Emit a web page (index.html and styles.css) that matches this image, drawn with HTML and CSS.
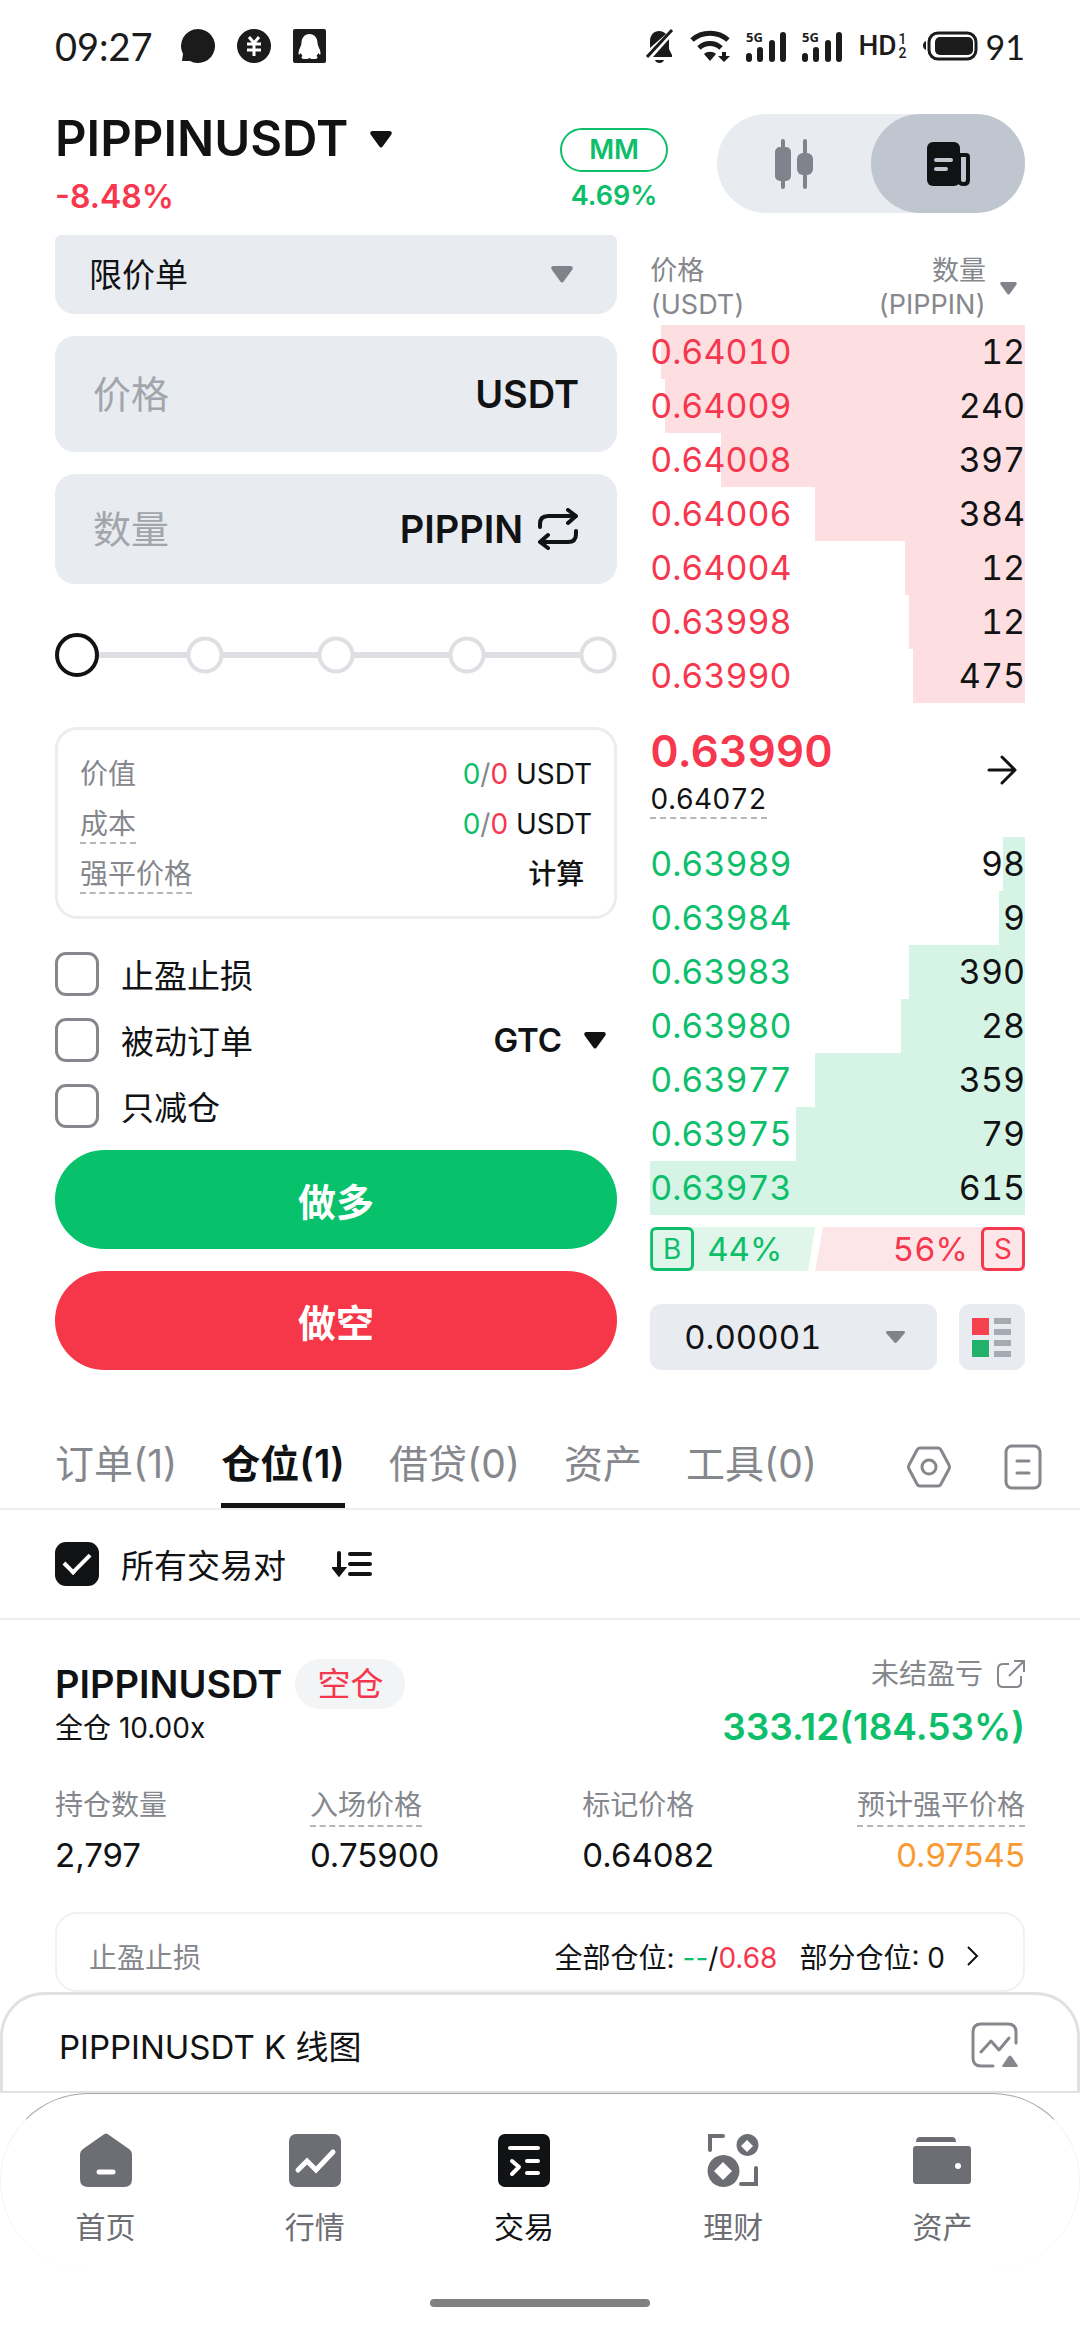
FILE: index.html
```html
<!DOCTYPE html>
<html lang="zh-CN">

<head>
    <meta charset="UTF-8">
    <meta name="viewport" content="width=device-width, initial-scale=1.0">
    <title>PIPPINUSDT 交易</title>
    <link rel="stylesheet" href="styles.css">
</head>

<body>

    <!-- Status bar -->
    <div class="status">
        <div class="status-left">
            <span class="clock">09:27</span>
            <svg width="34" height="34" viewBox="0 0 34 34"><path d="M17 0a17 17 0 1 1-8 32H1l1-7A17 17 0 0 1 17 0z" fill="#1b1b1b"/></svg>
            <svg width="34" height="34" viewBox="0 0 34 34"><circle cx="17" cy="17" r="17" fill="#1b1b1b"/><path d="M12 8l5 6 5-6M17 13v14M10 15h14M10 21h14" fill="none" stroke="#fff" stroke-width="3"/></svg>
            <svg width="33" height="34" viewBox="0 0 33 34"><rect width="33" height="34" rx="2" fill="#1b1b1b"/><path d="M16.500 5c5 0 8 4 8 9 0 3 3 6 3 10 0 2-1 2-2 0l-2 3c2 1 1 3-2 3-2 0-4 0-5-1-1 1-3 1-5 1-3 0-4-2-2-3l-2-3c-1 2-2 2-2 0 0-4 3-7 3-10 0-5 3-9 8-9z" fill="#fff"/></svg>
        </div>
        <div class="status-right">
            <svg width="28" height="36" viewBox="0 0 28 36"><path d="M4 20V13C4 7 8 3 13 3c3 0 5 1 7 3zM23 11v10l3 6v2H7z" fill="#1b1b1b"/><path d="M1 29L26 2" stroke="#1b1b1b" stroke-width="3"/><path d="M9 32h9c-1 4-8 4-9 0z" fill="#1b1b1b"/></svg>
            <svg width="40" height="34" viewBox="0 0 40 34"><path d="M2 11c10-9 26-9 36 0M9 19c6-6 16-6 22 0" fill="none" stroke="#1b1b1b" stroke-width="5"/><path d="M14 25c3-3 9-3 12 0l-6 7zM32 23h4v4h4l-6 6-6-6h4z" fill="#1b1b1b"/></svg>
            <svg width="40" height="38" viewBox="0 -4 40 38"><text x="0" y="11" class="net">5G</text><path d="M3 25v3M14 19v9M26 12v16M37 4v24" stroke="#1b1b1b" stroke-width="6" stroke-linecap="round"/></svg>
            <svg width="40" height="38" viewBox="0 -4 40 38"><text x="0" y="11" class="net">5G</text><path d="M3 25v3M14 19v9M26 12v16M37 4v24" stroke="#1b1b1b" stroke-width="6" stroke-linecap="round"/></svg>
            <span class="hd">HD<span class="sims"><i>1</i><i>2</i></span></span>
            <svg width="55" height="30" viewBox="0 0 55 30"><rect x="6" y="2" width="47" height="26" rx="9" fill="none" stroke="#1b1b1b" stroke-width="3"/><rect x="12" y="6" width="38" height="18" rx="5" fill="#1b1b1b"/><path d="M3 10v9c-4-1-4-8 0-9z" fill="#1b1b1b"/></svg>
            <span class="battery">91</span>
        </div>
    </div>

    <header>
        <div class="pair">
            <h1>PIPPINUSDT <svg width="22" height="17" viewBox="0 0 22 17"><path d="M2 0h18q3 1 1 4l-8 11q-2 3-4 0L1 4Q-1 1 2 0z" fill="#111214"/></svg></h1>
            <p class="change red">-8.48%</p>
        </div>
        <div class="margin-rate green">
            <span class="mm">MM</span>
            <span>4.69%</span>
        </div>
        <div class="toggle">
            <button type="button" aria-label="K线">
                <svg width="40" height="50" viewBox="0 0 40 50"><path d="M9 2v46M31 2v46" stroke="#81838c" stroke-width="4" stroke-linecap="round"/><rect x="1" y="8" width="16" height="34" rx="5" fill="#81838c"/><rect x="23" y="14" width="16" height="22" rx="6" fill="#81838c"/></svg>
            </button>
            <button type="button" class="on" aria-label="交易">
                <svg width="44" height="46" viewBox="0 0 44 46"><rect x="1" y="1" width="33" height="44" rx="6" fill="#111214"/><path d="M33 14h7q2 0 2 2v23q0 4-4 4-5 0-5-4z" fill="none" stroke="#111214" stroke-width="4"/><path d="M10 19h15M10 28h10" stroke="#bfc6d0" stroke-width="4" stroke-linecap="round"/></svg>
            </button>
        </div>
    </header>

    <main class="trade">
        <form class="order">
            <label class="select order-type">
                <select aria-label="订单类型"><option>限价单</option></select>
                <svg width="22" height="17" viewBox="0 0 22 17"><path d="M2 0h18q3 1 1 4l-8 11q-2 3-4 0L1 4Q-1 1 2 0z" fill="#81838c"/></svg>
            </label>
            <div class="field price">
                <input type="text" id="price" placeholder="价格" aria-label="价格">
                <label for="price">USDT</label>
            </div>
            <div class="field">
                <input type="text" id="amount" placeholder="数量" aria-label="数量">
                <label for="amount">PIPPIN</label>
                <svg width="42" height="42" viewBox="0 0 42 42" fill="none" stroke="#111214" stroke-width="4" stroke-linecap="round" stroke-linejoin="round"><path d="M3 19v-3q0-8 8-8h27M31 2l8 6-8 7M39 23v3q0 8-8 8H4M11 27l-8 7 8 6"/></svg>
            </div>
            <input type="range" class="slider" min="0" max="100" value="0" step="25" aria-label="仓位比例">

            <dl class="cost">
                <div><dt>价值</dt><dd><span class="green">0</span><i>/</i><span class="red">0</span> USDT</dd></div>
                <div><dt><span class="hint">成本</span></dt><dd><span class="green">0</span><i>/</i><span class="red">0</span> USDT</dd></div>
                <div><dt><span class="hint">强平价格</span></dt><dd class="calc">计算</dd></div>
            </dl>

            <div class="options">
                <label class="check"><input type="checkbox">止盈止损</label>
                <div class="option-row">
                    <label class="check"><input type="checkbox">被动订单</label>
                    <button type="button" class="gtc">GTC <svg width="22" height="17" viewBox="0 0 22 17"><path d="M2 0h18q3 1 1 4l-8 11q-2 3-4 0L1 4Q-1 1 2 0z" fill="#111214"/></svg></button>
                </div>
                <label class="check"><input type="checkbox">只减仓</label>
            </div>

            <button type="button" class="action long">做多</button>
            <button type="button" class="action short">做空</button>
        </form>

        <section class="book">
            <table class="asks">
                <thead>
                    <tr>
                        <th>价格<br>(USDT)</th>
                        <th><div class="qty-head"><span>数量<br>(PIPPIN)</span><svg width="17" height="13" viewBox="0 0 22 17"><path d="M2 0h18q3 1 1 4l-8 11q-2 3-4 0L1 4Q-1 1 2 0z" fill="#81838c"/></svg></div></th>
                    </tr>
                </thead>
                <tbody>
                    <tr style="--depth: 97%"><td>0.64010</td><td>12</td></tr>
                    <tr style="--depth: 96%"><td>0.64009</td><td>240</td></tr>
                    <tr style="--depth: 81%"><td>0.64008</td><td>397</td></tr>
                    <tr style="--depth: 56%"><td>0.64006</td><td>384</td></tr>
                    <tr style="--depth: 32%"><td>0.64004</td><td>12</td></tr>
                    <tr style="--depth: 31%"><td>0.63998</td><td>12</td></tr>
                    <tr style="--depth: 30%"><td>0.63990</td><td>475</td></tr>
                </tbody>
            </table>

            <div class="last">
                <div>
                    <strong class="red">0.63990</strong>
                    <span class="hint">0.64072</span>
                </div>
                <svg width="30" height="30" viewBox="0 0 30 30" fill="none" stroke="#111214" stroke-width="3" stroke-linecap="round" stroke-linejoin="round"><path d="M2 15h26M15 2l13 13-13 13"/></svg>
            </div>

            <table class="bids">
                <tbody>
                    <tr style="--depth: 6%"><td>0.63989</td><td>98</td></tr>
                    <tr style="--depth: 7%"><td>0.63984</td><td>9</td></tr>
                    <tr style="--depth: 31%"><td>0.63983</td><td>390</td></tr>
                    <tr style="--depth: 33%"><td>0.63980</td><td>28</td></tr>
                    <tr style="--depth: 56%"><td>0.63977</td><td>359</td></tr>
                    <tr style="--depth: 61%"><td>0.63975</td><td>79</td></tr>
                    <tr style="--depth: 100%"><td>0.63973</td><td>615</td></tr>
                </tbody>
            </table>

            <div class="ratio">
                <div class="buy" style="width: 44%"><b>B</b>44%</div>
                <div class="sell" style="width: 56%">56%<b>S</b></div>
            </div>

            <div class="book-tools">
                <label class="select step">
                    <select aria-label="精度"><option>0.00001</option></select>
                    <svg width="19" height="12" viewBox="0 0 19 12"><path d="M1 0h17q2 1 0 3l-7 8q-2 2-3 0L1 3Q-1 1 1 0z" fill="#81838c"/></svg>
                </label>
                <button type="button" class="depth-mode" aria-label="盘口显示">
                    <svg width="39" height="39" viewBox="0 0 39 39"><path d="M0 0h17v17H0z" fill="#f6414f"/><path d="M0 22h17v17H0z" fill="#22b16a"/><path d="M22 0h17v6H22zM22 11h17v6H22zM22 22h17v6H22zM22 33h17v6H22z" fill="#a6aab3"/></svg>
                </button>
            </div>
        </section>
    </main>

    <nav class="tabs">
        <a href="#">订单(1)</a>
        <a href="#" class="active">仓位(1)</a>
        <a href="#">借贷(0)</a>
        <a href="#">资产</a>
        <a href="#">工具(0)</a>
        <div class="tab-icons">
            <svg width="46" height="42" viewBox="0 0 46 42" fill="none" stroke="#85878d" stroke-width="3" stroke-linejoin="round"><path d="M14 2h18q2 0 3 2l8 15q1 2 0 4l-8 15q-1 2-3 2H14q-2 0-3-2L3 23q-1-2 0-4l8-15q1-2 3-2z"/><circle cx="23" cy="21" r="7"/></svg>
            <svg width="38" height="46" viewBox="0 0 38 46" fill="none" stroke="#85878d" stroke-width="3" stroke-linecap="round"><rect x="2" y="2" width="34" height="42" rx="6"/><path d="M13 17h12M13 29h12"/></svg>
        </div>
    </nav>

    <div class="filter">
        <label class="check"><input type="checkbox" checked>所有交易对</label>
        <svg width="40" height="28" viewBox="0 0 40 28" fill="none" stroke="#111214" stroke-width="4" stroke-linecap="round"><path d="M7 3v19M18 4h20M18 14h20M18 24h20"/><path d="M3 19l4 5 4-5z" fill="#111214"/></svg>
    </div>

    <section class="position">
        <div class="position-head">
            <div>
                <h2>PIPPINUSDT <span class="badge">空仓</span></h2>
                <p>全仓 10.00x</p>
            </div>
            <div class="pnl">
                <p>未结盈亏 <svg width="28" height="28" viewBox="0 0 28 28" fill="none" stroke="#85878d" stroke-width="2"><path d="M12 4H6Q1 4 1 9v13q0 5 5 5h13q5 0 5-5v-6M12 16L27 1M17 1h10v11"/></svg></p>
                <strong class="green">333.12(184.53%)</strong>
            </div>
        </div>
        <dl class="stats">
            <div><dt><span>持仓数量</span></dt><dd>2,797</dd></div>
            <div><dt><span class="hint">入场价格</span></dt><dd>0.75900</dd></div>
            <div><dt><span>标记价格</span></dt><dd>0.64082</dd></div>
            <div><dt><span class="hint">预计强平价格</span></dt><dd class="orange">0.97545</dd></div>
        </dl>
        <a href="#" class="tpsl">
            <span class="tpsl-name">止盈止损</span>
            <span>全部仓位: <span class="green">--</span>/<span class="red">0.68</span></span>
            <span>部分仓位: 0</span>
            <svg width="12" height="20" viewBox="0 0 12 20" fill="none" stroke="#111214" stroke-width="2"><path d="M1 1l9 9-9 9"/></svg>
        </a>
    </section>

    <a href="#" class="sheet">
        PIPPINUSDT K 线图
        <svg width="48" height="46" viewBox="0 0 48 46"><g fill="none" stroke="#85878d" stroke-width="3" stroke-linecap="round" stroke-linejoin="round"><path d="M22 44h-12q-8 0-8-8V10q0-8 8-8h27q8 0 8 8v11M10 30l10-11 8 9 10-12"/></g><path d="M31 44l6-9q2-3 4 0l6 9q0 1-2 1H33q-2 0-2-1z" fill="#85878d"/></svg>
    </a>

    <nav class="bottom">
        <a href="#">
            <svg width="52" height="54" viewBox="0 0 52 54"><path d="M23 2q3-3 6 0l20 14q3 2 3 6v24q0 8-8 8H8q-8 0-8-8V22q0-4 3-6z" fill="#6c6e73"/><path d="M19 39h14" stroke="#fff" stroke-width="5" stroke-linecap="round"/></svg>
            首页
        </a>
        <a href="#">
            <svg width="52" height="54" viewBox="0 0 52 54"><rect y="1" width="52" height="53" rx="7" fill="#6c6e73"/><path d="M9 37l9-9 9 9 17-18" fill="none" stroke="#fff" stroke-width="5" stroke-linecap="round"/></svg>
            行情
        </a>
        <a href="#" class="active">
            <svg width="52" height="54" viewBox="0 0 52 54"><rect y="1" width="52" height="53" rx="7" fill="#111214"/><path d="M12 15h28M14 28l7 6-7 7M29 28h11M29 40h11" fill="none" stroke="#fff" stroke-width="4" stroke-linecap="round" stroke-linejoin="round"/></svg>
            交易
        </a>
        <a href="#">
            <svg width="52" height="54" viewBox="0 0 52 54"><path d="M3 17V3h13M34 51h15V35" fill="none" stroke="#6c6e73" stroke-width="4" stroke-linecap="round"/><path fill-rule="evenodd" d="M16 22a16 16 0 1 0 1 0zM16 29l9 9-9 9-9-9zM40 1a11 11 0 1 0 1 0zM40 7l6 6-6 6-6-6z" fill="#6c6e73"/></svg>
            理财
        </a>
        <a href="#">
            <svg width="58" height="54" viewBox="0 0 58 54"><path d="M3 9q0-5 4-5h32q4 0 4 5zM3 13h52q3 0 3 3v32q0 3-3 3H3q-3 0-3-3V16q0-3 3-3z" fill="#6c6e73"/><circle cx="45" cy="33" r="3" fill="#fff"/></svg>
            资产
        </a>
    </nav>
    <div class="home-bar"></div>

</body>

</html>
```
FILE: styles.css
```css
* {
    margin: 0;
    padding: 0;
    box-sizing: border-box;
}

body {
    font-family: Inter, "Noto Sans CJK SC", sans-serif;
    font-size: 33px;
    background-color: #fff;
    color: #111214;
}

a {
    color: inherit;
    text-decoration: none;
}

svg {
    flex: none;
}

i {
    font-style: normal;
}

input,
select,
button {
    font: inherit;
    color: inherit;
    border: none;
    background: none;
    outline: none;
    appearance: none;
}

.red {
    color: #f6374d;
}

.green {
    color: #0dbf6a;
}

.orange {
    color: #fa9a32;
}

/* dashed line under explained labels */
.hint {
    border-bottom: 2px dashed #b4b6bb;
}

/* status bar */
.status {
    display: flex;
    justify-content: space-between;
    height: 92px;
    padding: 0 55px;
    font-family: Lato, "Noto Sans CJK SC", sans-serif;
}

.status-left,
.status-right {
    display: flex;
    align-items: center;
    color: #1b1b1b;
}

.status-left {
    gap: 22px;
}

.status-right {
    gap: 16px;
}

.clock {
    font-size: 38px;
}

.status-left .clock {
    margin-right: 6px;
}

.battery {
    margin-left: -8px;
    font-size: 34px;
}

.net {
    font: bold 13px "Noto Sans", sans-serif;
    fill: #1b1b1b;
}

.hd {
    display: flex;
    align-items: center;
    gap: 2px;
    font: 500 28px/32px Roboto, sans-serif;
}

.sims {
    display: flex;
    flex-direction: column;
    font-size: 14px;
    line-height: 14px;
}

/* header */
header {
    display: flex;
    align-items: flex-start;
    padding: 22px 55px 18px;
}

.pair {
    flex: 1;
}

h1 {
    display: flex;
    align-items: center;
    gap: 22px;
    font-size: 49px;
    line-height: 50px;
    font-weight: 600;
}

.change {
    margin-top: 13px;
    font-size: 32px;
    line-height: 40px;
    font-weight: 600;
}

.margin-rate {
    display: flex;
    flex-direction: column;
    align-items: center;
    gap: 4px;
    margin: 14px 49px 0 0;
    font-size: 27px;
    line-height: 40px;
    font-weight: 600;
}

.mm {
    padding: 0 27px;
    border: 2px solid #0dbf6a;
    border-radius: 22px;
}

.toggle {
    display: flex;
    border-radius: 50px;
    background-color: #e8ebf0;
}

.toggle button {
    display: flex;
    align-items: center;
    justify-content: center;
    width: 154px;
    height: 99px;
    border-radius: 50px;
}

.toggle .on {
    background-color: #bfc6d0;
}

/* order form and order book */
.trade {
    display: grid;
    grid-template-columns: minmax(0, 3fr) minmax(0, 2fr);
    gap: 33px;
    padding: 0 55px;
}

.order {
    display: flex;
    flex-direction: column;
    gap: 22px;
}

.select {
    display: grid;
    align-items: center;
    background-color: #e8ebf0;
}

.select select,
.select svg {
    grid-area: 1 / 1;
}

.select svg {
    justify-self: end;
    pointer-events: none;
}

.select select {
    width: 100%;
    height: 100%;
}

.order-type {
    height: 79px;
    padding: 0 44px 0 34px;
    border-radius: 6px 6px 20px 20px;
}

.field {
    display: flex;
    align-items: center;
    gap: 14px;
    height: 110px;
    padding: 0 38px;
    border-radius: 20px;
    background-color: #e8ebf0;
    font-size: 38px;
}

.price {
    height: 116px;
}

.field input {
    flex: 1;
    min-width: 0;
}

.field input::placeholder {
    color: #a2a5ac;
}

.field label {
    font-weight: 600;
}

.slider {
    width: 100%;
    height: 44px;
    margin: 27px 0 28px;
    background:
        radial-gradient(circle, #fff 14px, #dedfe3 15px, #dedfe3 18px, transparent 19px) 25% 50% / 38px 38px no-repeat,
        radial-gradient(circle, #fff 14px, #dedfe3 15px, #dedfe3 18px, transparent 19px) 50% 50% / 38px 38px no-repeat,
        radial-gradient(circle, #fff 14px, #dedfe3 15px, #dedfe3 18px, transparent 19px) 75% 50% / 38px 38px no-repeat,
        radial-gradient(circle, #fff 14px, #dedfe3 15px, #dedfe3 18px, transparent 19px) 100% 50% / 38px 38px no-repeat,
        linear-gradient(#dedfe3, #dedfe3) 50% 50% / 92% 6px no-repeat;
}

.slider::-webkit-slider-thumb {
    appearance: none;
    width: 44px;
    height: 44px;
    border: 4px solid #111214;
    border-radius: 50%;
    background-color: #fff;
}

.cost {
    height: 192px;
    padding: 19px 22px 0;
    border: 3px solid #ededee;
    border-radius: 22px;
    font-size: 28px;
    line-height: 50px;
}

.cost div {
    display: flex;
    justify-content: space-between;
}

.cost dt,
.cost i {
    color: #85878d;
}

.cost .hint {
    display: inline-block;
    line-height: 36px;
}

.cost .calc {
    padding-right: 8px;
    font-weight: 500;
}

.options {
    display: flex;
    flex-direction: column;
    gap: 22px;
    margin-top: 11px;
}

.option-row {
    display: flex;
    justify-content: space-between;
}

.check {
    display: flex;
    align-items: center;
    gap: 22px;
    height: 44px;
}

.check input {
    width: 44px;
    height: 44px;
    border: 3px solid #85878d;
    border-radius: 11px;
}

.check input:checked {
    display: grid;
    place-items: center;
    border-color: #111214;
    background-color: #111214;
}

.check input:checked::after {
    content: "";
    width: 22px;
    height: 11px;
    margin-bottom: 8px;
    border: solid #fff;
    border-width: 0 0 4px 4px;
    transform: rotate(-45deg);
}

.gtc {
    display: flex;
    align-items: center;
    gap: 22px;
    padding-right: 11px;
    font-weight: 600;
}

.action {
    height: 99px;
    border-radius: 50px;
    color: #fff;
    font-size: 38px;
    font-weight: 600;
}

.long {
    background-color: #08c16b;
}

.short {
    background-color: #f6374a;
}

/* order book */
.book {
    font-variant-numeric: tabular-nums;
}

table {
    width: 100%;
    border-spacing: 0;
}

th {
    height: 90px;
    padding-bottom: 3px;
    color: #85878d;
    font-size: 27px;
    line-height: 34px;
    font-weight: 400;
    text-align: left;
    vertical-align: bottom;
}

.qty-head {
    display: flex;
    align-items: center;
    justify-content: flex-end;
    gap: 14px;
    padding-right: 8px;
    text-align: right;
}

td {
    height: 54px;
    font-size: 34px;
    line-height: 54px;
}

td:last-child {
    text-align: right;
}

.asks td:first-child {
    color: #f6374d;
}

.bids td:first-child {
    color: #0dbf6a;
}

/* depth bar grows from the right edge */
.asks tbody tr {
    background: linear-gradient(to left, #fddfe1 var(--depth), transparent var(--depth));
}

.bids tr {
    background: linear-gradient(to left, #d6f4e5 var(--depth), transparent var(--depth));
}

.last {
    display: flex;
    align-items: center;
    justify-content: space-between;
    height: 134px;
    padding-right: 8px;
}

.last div {
    display: flex;
    flex-direction: column;
    align-items: flex-start;
}

.last strong {
    font-size: 44px;
    line-height: 60px;
    font-weight: 600;
}

.last .hint {
    font-size: 28px;
    line-height: 36px;
}

.ratio {
    display: flex;
    margin-top: 12px;
    font-size: 33px;
    line-height: 44px;
}

.ratio div {
    display: flex;
    gap: 13px;
}

.ratio b {
    width: 44px;
    height: 44px;
    border: 3px solid;
    border-radius: 6px;
    font-size: 28px;
    line-height: 38px;
    font-weight: 400;
    text-align: center;
}

.buy {
    color: #0dbf6a;
    background-color: #e0f6eb;
    clip-path: polygon(0 0, 100% 0, calc(100% - 7px) 100%, 0 100%);
}

.sell {
    justify-content: flex-end;
    color: #f6374d;
    background-color: #fde6e8;
    clip-path: polygon(8px 0, 100% 0, 100% 100%, 0 100%);
}

.book-tools {
    display: flex;
    gap: 22px;
    margin-top: 33px;
}

.step {
    flex: 1;
    height: 66px;
    padding: 0 32px 0 34px;
    border-radius: 11px;
}

.depth-mode {
    display: grid;
    place-items: center;
    width: 66px;
    height: 66px;
    border-radius: 11px;
    background-color: #e8ebf0;
}

/* tabs */
.tabs {
    display: flex;
    gap: 44px;
    margin-top: 55px;
    padding: 0 38px 0 55px;
    border-bottom: 2px solid #ededee;
    color: #85878d;
    font-size: 39px;
    line-height: 78px;
}

.tabs a {
    padding-bottom: 5px;
}

.tabs .active {
    padding-bottom: 0;
    border-bottom: 5px solid #111214;
    color: #111214;
    font-weight: 600;
}

.tab-icons {
    display: flex;
    align-items: center;
    gap: 52px;
    margin-left: auto;
}

.filter {
    display: flex;
    align-items: center;
    gap: 46px;
    height: 110px;
    padding: 0 55px;
    border-bottom: 2px solid #ededee;
}

/* position card */
.position {
    padding: 39px 55px 0;
}

.position-head {
    display: flex;
    justify-content: space-between;
    font-size: 28px;
}

h2 {
    display: flex;
    align-items: center;
    gap: 13px;
    font-size: 38px;
    line-height: 50px;
    font-weight: 600;
}

.badge {
    padding: 0 22px;
    border-radius: 25px;
    background-color: #f3f4f5;
    color: #f6374d;
    font-size: 33px;
    font-weight: 400;
}

.position-head p {
    line-height: 38px;
}

.pnl {
    text-align: right;
}

.pnl p {
    display: flex;
    align-items: center;
    justify-content: flex-end;
    gap: 14px;
    line-height: 30px;
    color: #85878d;
}

.pnl strong {
    font-size: 37px;
    line-height: 76px;
    font-weight: 600;
}

.stats {
    display: flex;
    justify-content: space-between;
    margin-top: 20px;
}

.stats dt {
    height: 44px;
    color: #85878d;
    font-size: 28px;
    line-height: 40px;
}

.stats dt span {
    display: inline-block;
}

.stats dd {
    margin-top: 6px;
    line-height: 40px;
}

.stats div:last-child {
    text-align: right;
}

.tpsl {
    display: flex;
    align-items: center;
    gap: 22px;
    height: 80px;
    margin-top: 37px;
    padding: 8px 44px 0 32px;
    border: 2px solid #f1f1f2;
    border-radius: 22px;
    font-size: 28px;
}

.tpsl-name {
    flex: 1;
    color: #85878d;
}

/* chart sheet */
.sheet {
    display: flex;
    align-items: center;
    justify-content: space-between;
    height: 101px;
    padding: 4px 58px 0 56px;
    border: 3px solid #e0e1e3;
    border-bottom-width: 2px;
    border-radius: 44px 44px 0 0;
}

/* bottom menu */
.bottom {
    display: flex;
    height: 176px;
    padding: 39px 32px 0 0;
    border-top: 1px solid #a6a6a6;
    border-left: 1px solid #f4f4f4;
    border-right: 1px solid #f4f4f4;
    border-radius: 88px;
    color: #6c6e73;
    font-size: 30px;
}

.bottom a {
    flex: 1;
    display: flex;
    flex-direction: column;
    align-items: center;
    gap: 20px;
    line-height: 40px;
}

.bottom .active {
    color: #111214;
}

.home-bar {
    width: 220px;
    height: 8px;
    margin: 30px auto;
    border-radius: 4px;
    background-color: #808080;
}
```
